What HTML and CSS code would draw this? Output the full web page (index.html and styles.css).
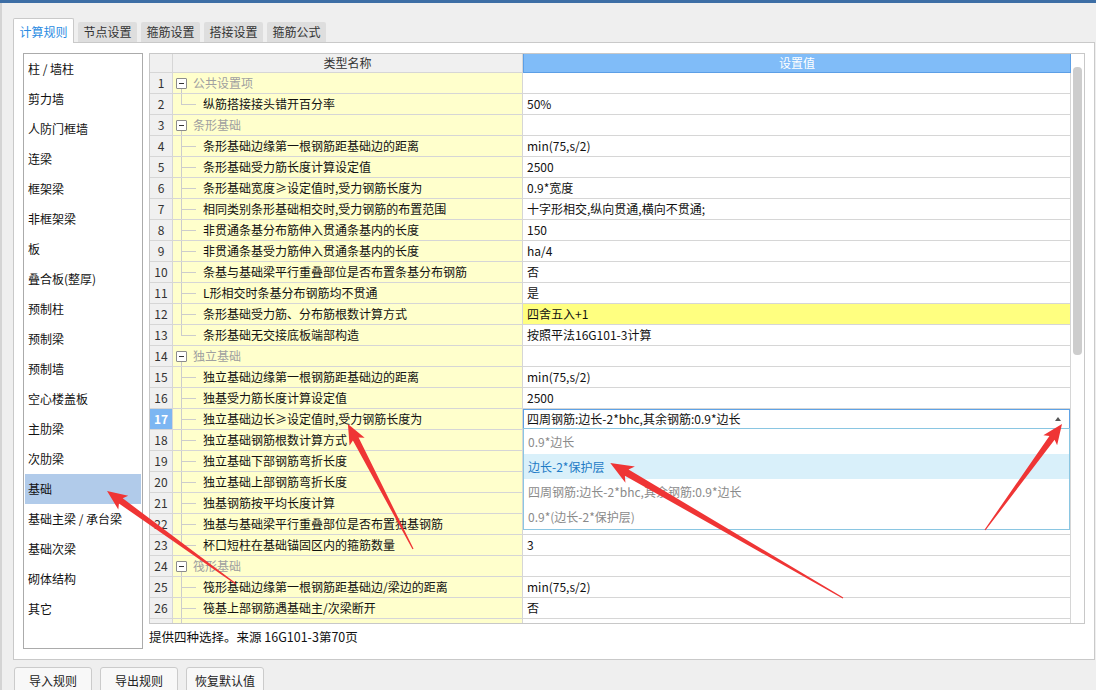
FILE: index.html
```html
<!DOCTYPE html>
<html lang="zh-CN">
<head>
<meta charset="utf-8">
<title>计算规则</title>
<link rel="stylesheet" href="styles.css">
</head>
<body>
<div class="titlebar"></div>
<div class="app">
  <div class="tabs">
    <div class="tab active">计算规则</div>
    <div class="tab">节点设置</div>
    <div class="tab">箍筋设置</div>
    <div class="tab">搭接设置</div>
    <div class="tab">箍筋公式</div>
  </div>
  <div class="panel">
    <ul class="cats">
      <li>柱 / 墙柱</li>
      <li>剪力墙</li>
      <li>人防门框墙</li>
      <li>连梁</li>
      <li>框架梁</li>
      <li>非框架梁</li>
      <li>板</li>
      <li>叠合板(整厚)</li>
      <li>预制柱</li>
      <li>预制梁</li>
      <li>预制墙</li>
      <li>空心楼盖板</li>
      <li>主肋梁</li>
      <li>次肋梁</li>
      <li class="sel">基础</li>
      <li>基础主梁 / 承台梁</li>
      <li>基础次梁</li>
      <li>砌体结构</li>
      <li>其它</li>
    </ul>
    <div class="main">
      <div class="table">
        <div class="grid">
          <div class="h"></div><div class="h">类型名称</div><div class="h hv">设置值</div>

          <div class="c n">1</div><div class="c nm grp"><span class="box"></span>公共设置项</div><div class="c v"></div>
          <div class="c n">2</div><div class="c nm last"><span class="tree"></span>纵筋搭接接头错开百分率</div><div class="c v">50%</div>
          <div class="c n">3</div><div class="c nm grp"><span class="box"></span>条形基础</div><div class="c v"></div>
          <div class="c n">4</div><div class="c nm"><span class="tree"></span>条形基础边缘第一根钢筋距基础边的距离</div><div class="c v">min(75,s/2)</div>
          <div class="c n">5</div><div class="c nm"><span class="tree"></span>条形基础受力筋长度计算设定值</div><div class="c v">2500</div>
          <div class="c n">6</div><div class="c nm"><span class="tree"></span>条形基础宽度≥设定值时,受力钢筋长度为</div><div class="c v">0.9*宽度</div>
          <div class="c n">7</div><div class="c nm"><span class="tree"></span>相同类别条形基础相交时,受力钢筋的布置范围</div><div class="c v">十字形相交,纵向贯通,横向不贯通;</div>
          <div class="c n">8</div><div class="c nm"><span class="tree"></span>非贯通条基分布筋伸入贯通条基内的长度</div><div class="c v">150</div>
          <div class="c n">9</div><div class="c nm"><span class="tree"></span>非贯通条基受力筋伸入贯通条基内的长度</div><div class="c v">ha/4</div>
          <div class="c n">10</div><div class="c nm"><span class="tree"></span>条基与基础梁平行重叠部位是否布置条基分布钢筋</div><div class="c v">否</div>
          <div class="c n">11</div><div class="c nm"><span class="tree"></span>L形相交时条基分布钢筋均不贯通</div><div class="c v">是</div>
          <div class="c n">12</div><div class="c nm"><span class="tree"></span>条形基础受力筋、分布筋根数计算方式</div><div class="c v hl">四舍五入+1</div>
          <div class="c n">13</div><div class="c nm last"><span class="tree"></span>条形基础无交接底板端部构造</div><div class="c v">按照平法16G101-3计算</div>
          <div class="c n">14</div><div class="c nm grp"><span class="box"></span>独立基础</div><div class="c v"></div>
          <div class="c n">15</div><div class="c nm"><span class="tree"></span>独立基础边缘第一根钢筋距基础边的距离</div><div class="c v">min(75,s/2)</div>
          <div class="c n">16</div><div class="c nm"><span class="tree"></span>独基受力筋长度计算设定值</div><div class="c v">2500</div>
          <div class="c n cur">17</div><div class="c nm"><span class="tree"></span>独立基础边长≥设定值时,受力钢筋长度为</div>
          <div class="c v combo">
            <div class="cbox"><span>四周钢筋:边长-2*bhc,其余钢筋:0.9*边长</span><span class="caret"></span></div>
            <div class="dd">
              <div>0.9*边长</div>
              <div class="on">边长-2*保护层</div>
              <div>四周钢筋:边长-2*bhc,其余钢筋:0.9*边长</div>
              <div>0.9*(边长-2*保护层)</div>
            </div>
          </div>
          <div class="c n">18</div><div class="c nm"><span class="tree"></span>独立基础钢筋根数计算方式</div><div class="c v"></div>
          <div class="c n">19</div><div class="c nm"><span class="tree"></span>独立基础下部钢筋弯折长度</div><div class="c v"></div>
          <div class="c n">20</div><div class="c nm"><span class="tree"></span>独立基础上部钢筋弯折长度</div><div class="c v"></div>
          <div class="c n">21</div><div class="c nm"><span class="tree"></span>独基钢筋按平均长度计算</div><div class="c v"></div>
          <div class="c n">22</div><div class="c nm"><span class="tree"></span>独基与基础梁平行重叠部位是否布置独基钢筋</div><div class="c v">否</div>
          <div class="c n">23</div><div class="c nm last"><span class="tree"></span>杯口短柱在基础锚固区内的箍筋数量</div><div class="c v">3</div>
          <div class="c n">24</div><div class="c nm grp"><span class="box"></span>筏形基础</div><div class="c v"></div>
          <div class="c n">25</div><div class="c nm"><span class="tree"></span>筏形基础边缘第一根钢筋距基础边/梁边的距离</div><div class="c v">min(75,s/2)</div>
          <div class="c n">26</div><div class="c nm"><span class="tree"></span>筏基上部钢筋遇基础主/次梁断开</div><div class="c v">否</div>
          <div class="c n">27</div><div class="c nm"><span class="tree"></span>筏基与基础梁平行重叠部位是否布置筏基钢筋</div><div class="c v">否</div>
        </div>
        <div class="vscroll"><div class="thumb"></div></div>
      </div>
      <div class="status">提供四种选择。来源 16G101-3第70页</div>
    </div>
  </div>
  <div class="buttons">
    <button class="btn">导入规则</button>
    <button class="btn">导出规则</button>
    <button class="btn">恢复默认值</button>
  </div>
</div>
<svg class="marks" width="1096" height="690" viewBox="0 0 1096 690">
  <g fill="#ef3535">
    <polygon transform="translate(413,549) rotate(-117.5)" points="0,-0.6 124,-3.2 121,-8.5 141,0 121,8.5 124,3.2 0,0.6"/>
    <polygon transform="translate(236,584) rotate(-144.2)" points="0,-0.6 142,-3.2 139,-8.5 159,0 139,8.5 142,3.2 0,0.6"/>
    <polygon transform="translate(843,598) rotate(-149.9)" points="0,-0.6 250,-3.6 246,-9.5 269,0 246,9.5 250,3.6 0,0.6"/>
    <polygon transform="translate(985,530) rotate(-54)" points="0,-0.6 114,-3.2 111,-8.5 131,0 111,8.5 114,3.2 0,0.6"/>
  </g>
</svg>
</body>
</html>
```

FILE: styles.css
```css
* {
  box-sizing: border-box;
  margin: 0;
  padding: 0;
}

html, body {
  width: 1096px;
  height: 690px;
  overflow: hidden;
}

body {
  background: #efefef;
  font-family: "Noto Sans CJK SC", "Microsoft YaHei", sans-serif;
  font-size: 12px;
  color: #111;
}

.titlebar {
  height: 3px;
  background: #3d6ea5;
}

.app {
  border-left: 2px solid #d4d4d4;
  height: 687px;
}

/* tabs */
.tabs {
  display: flex;
  align-items: flex-end;
  gap: 4px;
  height: 39px;
  padding-left: 11px;
}

.tab {
  width: 59px;
  height: 20px;
  line-height: 20px;
  text-align: center;
  background: #dedede;
  color: #333;
  border-radius: 2px 2px 0 0;
}

.tab.active {
  position: relative;
  z-index: 1;
  width: 61px;
  height: 25px;
  margin-bottom: -1px;
  padding-top: 2px;
  line-height: 21px;
  background: #fff;
  color: #2a8be2;
  border: 1px solid #c9c9c9;
  border-bottom: none;
}

/* panel */
.panel {
  margin-left: 11px;
  width: 1082px;
  height: 618px;
  background: #fff;
  border: 1px solid #c9c9c9;
  display: flex;
  gap: 6px;
  padding: 10px 9px 9px 9px;
}

.cats {
  list-style: none;
  width: 120px;
  height: 596px;
  border: 1px solid #ababab;
  flex: none;
}

.cats li {
  height: 30px;
  line-height: 30px;
  padding-left: 4px;
  color: #111;
  white-space: nowrap;
}

.cats li.sel {
  margin: 0 1px;
  padding-left: 3px;
  background: #b1cbea;
}

.main {
  width: 936px;
  display: flex;
  flex-direction: column;
}

.table {
  height: 575px;
  border: 1px solid #c8c8c8;
  display: flex;
  overflow: hidden;
}

.grid {
  width: 921px;
  height: 573px;
  overflow: hidden;
  display: grid;
  grid-template-columns: 23px 350px 548px;
  grid-template-rows: 19px;
  grid-auto-rows: 21px;
  align-content: start;
}

.h {
  background: #f0f0f0;
  border-right: 1px solid #d6d6d6;
  border-bottom: 1px solid #d6d6d6;
  line-height: 18px;
  text-align: center;
  color: #333;
}

.h.hv {
  background: #80bcf8;
  border: 1px solid #5c9fe6;
  border-top: none;
  line-height: 18px;
  color: #fff;
}

.c {
  border-right: 1px solid #d6d6d6;
  border-bottom: 1px solid #d6d6d6;
  line-height: 20px;
  white-space: nowrap;
  overflow: hidden;
}

.n {
  background: #f0f0f0;
  text-align: center;
  color: #333;
}

.n.cur {
  background: #7cb6f2;
  color: #fff;
  font-weight: bold;
}

.nm {
  background: #ffffcc;
  display: flex;
  align-items: center;
  color: #111;
}

.nm.grp {
  color: #a0a0a0;
  background: linear-gradient(#c8c8c8, #c8c8c8) 8px 100% / 1px 5px no-repeat, #ffffcc;
}

.box {
  flex: none;
  width: 11px;
  height: 11px;
  margin: 0 6px 0 3px;
  border: 1px solid #8c8c8c;
  border-radius: 1px;
  background: linear-gradient(#333, #333) center / 5px 1px no-repeat, #fff;
}

.tree {
  flex: none;
  width: 15px;
  height: 20px;
  margin: 0 7px 0 8px;
  background:
    linear-gradient(#cccccc, #cccccc) 0 0 / 1px 100% no-repeat,
    linear-gradient(#cccccc, #cccccc) 0 50% / 100% 1px no-repeat;
}

.last .tree {
  background:
    linear-gradient(#cccccc, #cccccc) 0 0 / 1px 50% no-repeat,
    linear-gradient(#cccccc, #cccccc) 0 50% / 100% 1px no-repeat;
}

.v {
  background: #fff;
  padding-left: 4px;
  color: #111;
}

.v.hl {
  background: #ffff80;
}

.v.combo {
  position: relative;
  overflow: visible;
  padding-left: 0;
  z-index: 5;
}

.cbox {
  height: 20px;
  border: 1px solid #5ea2e6;
  display: flex;
  align-items: center;
  justify-content: space-between;
  padding: 0 8px 0 3px;
  line-height: 18px;
  background: #fff;
}

.caret {
  width: 0;
  height: 0;
  border-left: 3px solid transparent;
  border-right: 3px solid transparent;
  border-bottom: 4px solid #555;
}

.dd {
  position: absolute;
  left: 0;
  right: 0;
  top: 19px;
  background: #fff;
  border: 1px solid #8ac6e2;
}

.dd div {
  height: 25px;
  line-height: 25px;
  padding-left: 4px;
  color: #8a8a8a;
}

.dd div.on {
  background: #d9f0fa;
  color: #1e7bc6;
}

.vscroll {
  width: 13px;
  background: #fff;
  padding: 13px 0 0 2px;
}

.thumb {
  width: 9px;
  height: 288px;
  border-radius: 4px;
  background: #cdcdcd;
}

.status {
  height: 26px;
  line-height: 26px;
  font-size: 12.5px;
  color: #111;
}

/* bottom buttons */
.buttons {
  display: flex;
  gap: 8px;
  margin: 7px 0 0 12px;
}

.btn {
  width: 78px;
  height: 28px;
  padding-bottom: 2px;
  border: 1px solid #cbcbcb;
  border-radius: 3px;
  background: #f8f8f8;
  font-family: "Noto Sans CJK SC", "Microsoft YaHei", sans-serif;
  font-size: 12px;
  color: #222;
}

.marks {
  position: absolute;
  left: 0;
  top: 0;
  z-index: 20;
  pointer-events: none;
}
```
